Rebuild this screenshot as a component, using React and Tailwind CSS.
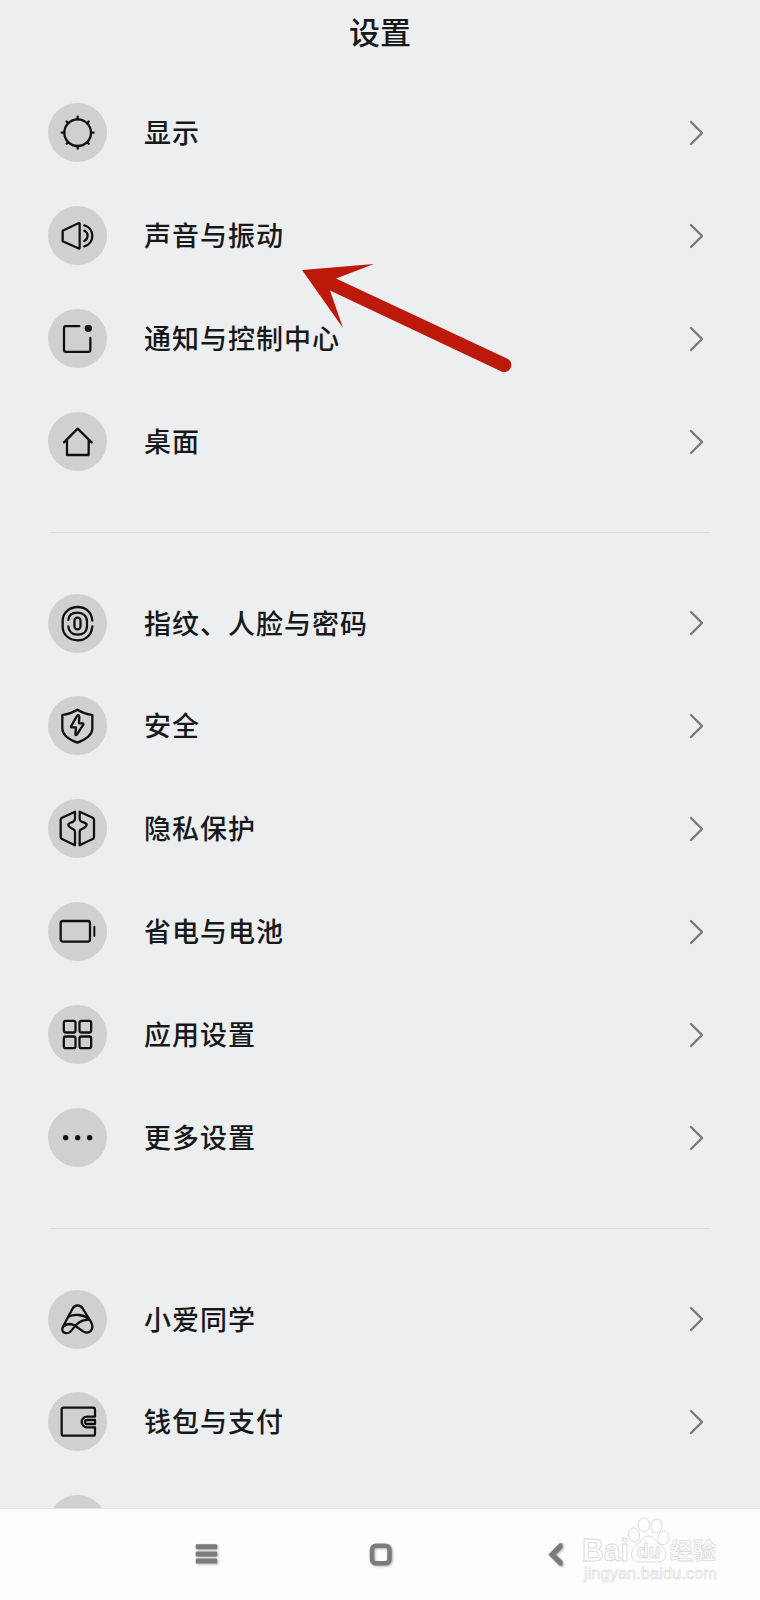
const icons = {
  display: (
    <>
      <circle cx="89" cy="89" r="40" />
      <path d="M89 49V41M89 129v8M49 89H41M129 89h8M60.7 60.7l-5-5M117.3 60.7l5-5M60.7 117.3l-5 5M117.3 117.3l5 5" />
    </>
  ),
  sound: (
    <>
      <path d="M44 74 91 52Q95 50 95 55V123Q95 129 91 127L44 106Z" />
      <path d="M109 58C141 66 141 112 109 121M109 74C122 80 122 98 109 105" />
    </>
  ),
  notification: (
    <>
      <path d="M94 51.500H54Q48 51.500 48 57.500V122Q48 128.500 54 128.500H121Q127 128.500 127 122V87" />
      <circle cx="121" cy="58" r="11" fill="#0e1012" stroke="none" />
    </>
  ),
  home: <path d="M48 91 89 50 131 91M57 84V129H122V84" />,
  fingerprint: (
    <>
      <path d="M133 80C131 54 113 39 89 39S44 56 44 80V98C44 122 64 139 89 139S131 122 133 97" />
      <path d="M61 78C62 64 73 56 89 56S117 66 117 82V96C117 112 106 122 89 122S62 112 61 97" />
      <rect x="79.500" y="71" width="18" height="35" rx="9" />
    </>
  ),
  security: (
    <>
      <path d="M88 41Q109 54 133 57V98Q133 122 88 140Q43 122 43 98V57Q67 54 88 41Z" />
      <path d="M87 60 69 91Q68 94 71 94H84L82 114Q82 120 87 115L106 86Q107 82 104 82H93L94 62Q92 54 87 60Z" />
    </>
  ),
  privacy: (
    <>
      <path d="M81 38 42 56Q38 58 38 63V113Q38 118 42 120L81 139V98Q81 93 76 91C70 88 61 82 61 77S70 71 75 68Q81 65 81 60Z" />
      <path d="M95 38 134 56Q138 58 138 63V113Q138 118 134 120L95 139V98Q95 93 100 91C106 88 116 82 116 77S107 71 101 68Q95 65 95 60Z" />
    </>
  ),
  battery: (
    <>
      <rect x="38" y="57" width="88" height="62" rx="7" />
      <path d="M139 74v28" strokeWidth="6" />
    </>
  ),
  apps: (
    <>
      <rect x="47.500" y="47.500" width="35" height="35" rx="6" />
      <rect x="94.500" y="47.500" width="35" height="35" rx="6" />
      <rect x="47.500" y="94.500" width="35" height="35" rx="6" />
      <rect x="94.500" y="94.500" width="35" height="35" rx="6" />
    </>
  ),
  more: (
    <g fill="#0e1012" stroke="none">
      <circle cx="53" cy="89" r="8" />
      <circle cx="89" cy="89" r="8" />
      <circle cx="125" cy="89" r="8" />
    </g>
  ),
  assistant: (
    <>
      <path d="M44 112 73 57C80 43 98 43 105 57L128 94C140 114 128 128 116 128C98 126 86 102 64 102C49 103 40 114 43 121C46 131 60 131 66 126C80 112 90 89 122 89" />
      <path d="M61 80C80 71 106 73 124 88" />
    </>
  ),
  wallet: (
    <>
      <path d="M141 74V53Q141 47 135 47H47Q41 47 41 53V125Q41 131 47 131H135Q141 131 141 125V106H117A16 16 0 0 1 117 74Z" />
      <path d="M141 84H117A6 6 0 0 0 117 96H141Z" />
    </>
  ),
};

const groups = [
  [
    { icon: "display", label: "显示" },
    { icon: "sound", label: "声音与振动" },
    { icon: "notification", label: "通知与控制中心" },
    { icon: "home", label: "桌面" },
  ],
  [
    { icon: "fingerprint", label: "指纹、人脸与密码" },
    { icon: "security", label: "安全" },
    { icon: "privacy", label: "隐私保护" },
    { icon: "battery", label: "省电与电池" },
    { icon: "apps", label: "应用设置" },
    { icon: "more", label: "更多设置" },
  ],
  [
    { icon: "assistant", label: "小爱同学" },
    { icon: "wallet", label: "钱包与支付" },
    { icon: null, label: "" },
  ],
];

function Row({ icon, label }) {
  return (
    <div className="flex h-[102.9px] items-center pr-[57px] pl-12">
      <div className="h-[59px] w-[59px] shrink-0 rounded-full bg-[#cfd0d2]">
        <svg
          viewBox="0 0 177 177"
          className="h-full w-full"
          fill="none"
          stroke="#0e1012"
          strokeWidth="6.800"
          strokeLinecap="round"
          strokeLinejoin="round"
        >
          {icons[icon]}
        </svg>
      </div>
      <span className="ml-[37px] flex-1 pb-[2px] text-[27px] leading-none font-medium tracking-[1px]">{label}</span>
      <svg width="14" height="26" viewBox="0 0 14 26" fill="none" stroke="#77797b" strokeWidth="2.300" strokeLinecap="round">
        <path d="M2 2 13 13 2 24" />
      </svg>
    </div>
  );
}

function Watermark() {
  return (
    <svg
      className="absolute top-[1510px] left-[576px] overflow-visible"
      width="150"
      height="80"
      viewBox="0 0 150 80"
      fill="#fefefe"
      stroke="#dcdcdc"
      strokeWidth="1"
    >
      <text x="6" y="51" fontSize="31" fontWeight="700" textLength="47" lengthAdjust="spacingAndGlyphs" fontFamily="Liberation Sans, sans-serif">Bai</text>
      <ellipse cx="58" cy="25" rx="5.500" ry="7" transform="rotate(-12 58 25)" />
      <ellipse cx="68" cy="15" rx="5.500" ry="7" />
      <ellipse cx="80.500" cy="16" rx="5.500" ry="7" transform="rotate(8 80.500 16)" />
      <ellipse cx="87.500" cy="28" rx="5.500" ry="7" transform="rotate(12 87.500 28)" />
      <path d="M72 26C66 26 65 32 60 36C53 41 54 52 64 52H82C92 52 92 41 85 36C80 32 78 26 72 26Z" />
      <text x="61" y="48" fontSize="20" fontWeight="700" textLength="23" lengthAdjust="spacingAndGlyphs" fontFamily="Liberation Sans, sans-serif">du</text>
      <text x="94" y="49" fontSize="23" fontWeight="700" strokeWidth="0.800" fontFamily="Noto Sans CJK SC, sans-serif">经验</text>
      <text x="8" y="69" fontSize="16" textLength="133" lengthAdjust="spacingAndGlyphs" strokeWidth="0.600" fontFamily="Liberation Sans, sans-serif">jingyan.baidu.com</text>
    </svg>
  );
}

function NavBar() {
  return (
    <div className="flex h-[92px] shrink-0 items-start border-t border-[#e0e3e6] bg-[#fdfdfd] pt-[33px] pl-[194px]">
      <svg width="26" height="26" viewBox="0 0 26 26" fill="#7b7b7b" className="drop-shadow-[1px_1px_1px_rgba(0,0,0,0.3)]">
        <rect x="1.700" y="2.300" width="21.500" height="5" rx="1.200" />
        <rect x="1.700" y="9.500" width="21.500" height="5" rx="1.200" />
        <rect x="1.700" y="16.600" width="21.500" height="5" rx="1.200" />
      </svg>
      <svg width="26" height="26" viewBox="0 0 26 26" fill="none" stroke="#7b7b7b" strokeWidth="4.600" className="ml-[148px] drop-shadow-[1px_1px_1px_rgba(0,0,0,0.3)]">
        <rect x="4" y="3.700" width="17.500" height="17.500" rx="4" />
      </svg>
      <svg width="22" height="26" viewBox="0 0 22 26" fill="#7b7b7b" className="ml-[151px] drop-shadow-[1px_1px_1px_rgba(0,0,0,0.3)]">
        <path d="M14.500 1.500H17.300V6L10.600 12.500 17.300 19V23.500H14.500L3.700 12.500Z" stroke="#7b7b7b" strokeWidth="0.500" strokeLinejoin="round" />
      </svg>
    </div>
  );
}

export default function App() {
  return (
    <div className="relative flex h-[1600px] w-[760px] flex-col overflow-hidden bg-[#edeef0] font-['Noto_Sans_CJK_SC',sans-serif] text-[#16181a]">
      <div className="flex h-[1508px] shrink-0 flex-col overflow-hidden">
        <h1 className="flex h-[81.500px] shrink-0 justify-center pt-[14.500px] text-[31px] leading-[31px] font-medium">设置</h1>
        {groups.map((rows, i) => (
          <div key={i} className="shrink-0">
            {i > 0 && (
              <div className="flex h-[78.600px] items-center pr-[50px] pl-[50px]">
                <div className="h-px w-full bg-[#dcdddf]" />
              </div>
            )}
            {rows.map((row) => (
              <Row key={row.label} {...row} />
            ))}
          </div>
        ))}
      </div>
      <NavBar />
      <svg className="absolute top-[250px] left-[290px]" width="240" height="140" viewBox="0 0 240 140" fill="#bd190a">
        <path d="M12 20 84 14 46 28.500 217 108.500A6.800 6.800 0 0 1 211.500 121.500L40 40.500 53 78Z" />
      </svg>
      <Watermark />
    </div>
  );
}
